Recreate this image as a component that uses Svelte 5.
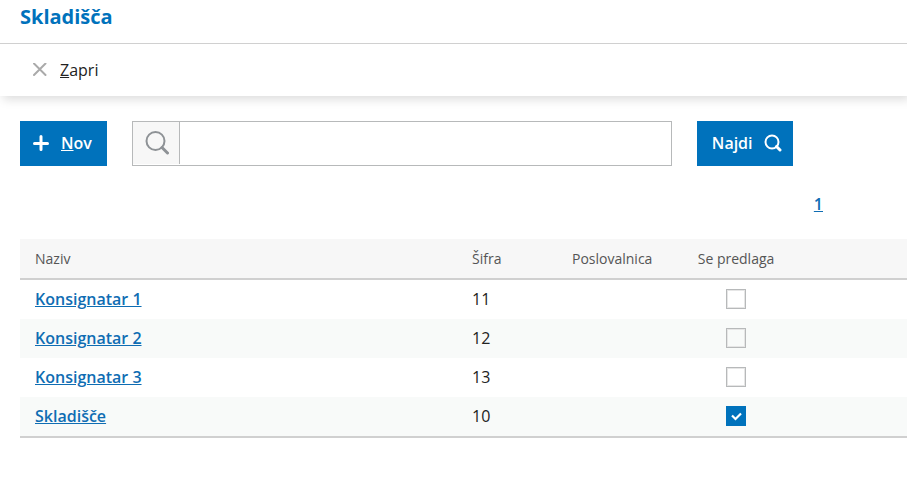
<script>
    let query = $state('');
    let search = $state('');

    let warehouses = $state([
        { name: 'Konsignatar 1', code: 11, office: '', suggested: false },
        { name: 'Konsignatar 2', code: 12, office: '', suggested: false },
        { name: 'Konsignatar 3', code: 13, office: '', suggested: false },
        { name: 'Skladišče', code: 10, office: '', suggested: true }
    ]);

    let rows = $derived(
        warehouses.filter((w) => w.name.toLowerCase().includes(search.toLowerCase()))
    );

    function handleSearch(e) {
        e.preventDefault();
        search = query.trim();
    }
</script>

<header class="page-header">
    <h1>Skladišča</h1>
</header>

<div class="toolbar">
    <button type="button" class="close" accesskey="z">
        <svg width="14" height="14" viewBox="0 0 14 14" aria-hidden="true">
            <path d="M1 0.5 L12.5 12 M12.5 0.5 L1 12" />
        </svg>
        <span><u>Z</u>apri</span>
    </button>
</div>

<main>
    <form class="actions" onsubmit={handleSearch}>
        <button type="button" class="btn btn-new" accesskey="n">
            <svg width="16" height="16" viewBox="0 0 16 16" aria-hidden="true">
                <path d="M8 1.5 V14.5 M1.5 8.5 H14.5" stroke-width="3" />
            </svg>
            <span><u>N</u>ov</span>
        </button>

        <div class="search-box">
            <label for="search">
                <svg width="24" height="24" viewBox="0 0 24 24" aria-label="Iskanje">
                    <circle cx="10.5" cy="10" r="9" />
                    <path d="M17 16.5 L22.5 22" stroke-width="3" />
                </svg>
            </label>
            <input id="search" type="text" bind:value={query} />
        </div>

        <button type="submit" class="btn btn-find">
            <span>Najdi</span>
            <svg width="18" height="18" viewBox="0 0 18 18" aria-hidden="true">
                <circle cx="8" cy="8" r="6.5" stroke-width="2" />
                <path d="M12.5 12.5 L16 16" stroke-width="3" />
            </svg>
        </button>
    </form>

    <nav class="pager">
        <a href="#1">1</a>
    </nav>

    <table>
        <colgroup>
            <col class="col-name" />
            <col class="col-code" />
            <col class="col-office" />
            <col class="col-suggested" />
            <col />
        </colgroup>
        <thead>
            <tr>
                <th>Naziv</th>
                <th>Šifra</th>
                <th>Poslovalnica</th>
                <th class="center">Se predlaga</th>
                <th></th>
            </tr>
        </thead>
        <tbody>
            {#each rows as row (row.code)}
                <tr>
                    <td><a href="#{row.code}">{row.name}</a></td>
                    <td>{row.code}</td>
                    <td>{row.office}</td>
                    <td class="center">
                        <input type="checkbox" aria-label="Se predlaga: {row.name}" bind:checked={row.suggested} />
                    </td>
                    <td></td>
                </tr>
            {/each}
        </tbody>
    </table>
</main>

<style>
    :global(body) {
        margin: 0;
        background-color: #fff;
        color: #222;
        font-family: "Open Sans", "Noto Sans", sans-serif;
        font-size: 16px;
        line-height: 24px;
        overflow-x: hidden;
    }

    button, input {
        font: inherit;
    }

    svg {
        display: block;
        fill: none;
        stroke: currentColor;
        stroke-linecap: round;
    }

    /* Header */
    .page-header {
        padding: 3px 20px 12px;
        border-bottom: 1px solid #d0d0d0;
    }

    h1 {
        margin: 0;
        color: #0072bc;
        font-size: 20px;
        line-height: 28px;
        font-weight: 700;
    }

    .toolbar {
        padding: 14px 33px;
        box-shadow: 3px 3px 10px rgba(0, 0, 0, 0.15);
        clip-path: inset(0 0 -20px 0);
    }

    .close {
        display: flex;
        align-items: center;
        gap: 13px;
        padding: 0;
        border: none;
        background: none;
        color: #222;
        cursor: pointer;
    }

    .close svg {
        color: #aaa;
        stroke-width: 2;
    }

    /* Search row */
    main {
        padding: 25px 0 40px 20px;
    }

    .actions {
        display: flex;
        gap: 25px;
        height: 45px;
    }

    .btn {
        display: flex;
        align-items: center;
        border: none;
        background-color: #0072bc;
        color: #fff;
        font-weight: 600;
        cursor: pointer;
    }

    .btn-new {
        gap: 12px;
        padding: 0 15px 2px 13px;
    }

    .btn-find {
        gap: 11px;
        padding: 0 11px 2px 15px;
    }

    .search-box {
        display: flex;
        flex: 1;
        box-sizing: border-box;
        max-width: 540px;
        padding-bottom: 1px;
        border: 1px solid #b7b9ba;
    }

    .search-box label {
        display: flex;
        align-items: center;
        padding: 0 10px 0 12px;
        border-right: 1px solid #b7b9ba;
        background-color: #f7f7f7;
        color: #8e9296;
    }

    .search-box svg {
        stroke-width: 2;
    }

    .search-box input {
        flex: 1;
        min-width: 0;
        padding: 0 12px;
        border: none;
        outline: none;
        background: none;
    }

    a {
        color: #0f6db3;
        font-weight: 600;
        text-decoration: underline;
    }

    .pager {
        padding: 26px 84px 23px 0;
        text-align: right;
    }

    /* Table */
    table {
        width: 100%;
        table-layout: fixed;
        border-collapse: separate;
        border-spacing: 0;
        border-bottom: 2px solid #d0d0d0;
    }

    .col-name {
        width: 437px;
    }

    .col-code {
        width: 100px;
    }

    .col-office {
        width: 125px;
    }

    .col-suggested {
        width: 108px;
    }

    th, td {
        box-sizing: border-box;
        height: 39px;
        padding: 0 15px 2px;
        text-align: left;
        white-space: nowrap;
    }

    th {
        height: 41px;
        padding-bottom: 0;
        border-bottom: 2px solid #d0d0d0;
        background-color: #f7f7f7;
        color: #555;
        font-size: 14px;
        font-weight: 500;
    }

    tbody tr:nth-child(even) {
        background-color: #f8faf9;
    }

    .center {
        text-align: center;
    }

    input[type="checkbox"] {
        appearance: none;
        display: block;
        box-sizing: border-box;
        width: 20px;
        height: 20px;
        margin: 0 auto;
        border: 1px solid #b7b9ba;
        box-shadow: inset 0 0 0 1px #e6e6e6;
        cursor: pointer;
    }

    input[type="checkbox"]:checked {
        border-color: #0072bc;
        background: #0072bc url("data:image/svg+xml,%3Csvg xmlns='http://www.w3.org/2000/svg' viewBox='0 0 18 18'%3E%3Cpath d='M5 8.5l3.5 3.5 5.5-5.5' fill='none' stroke='white' stroke-width='2.2'/%3E%3C/svg%3E") center / 18px 18px no-repeat;
        box-shadow: none;
    }
</style>
